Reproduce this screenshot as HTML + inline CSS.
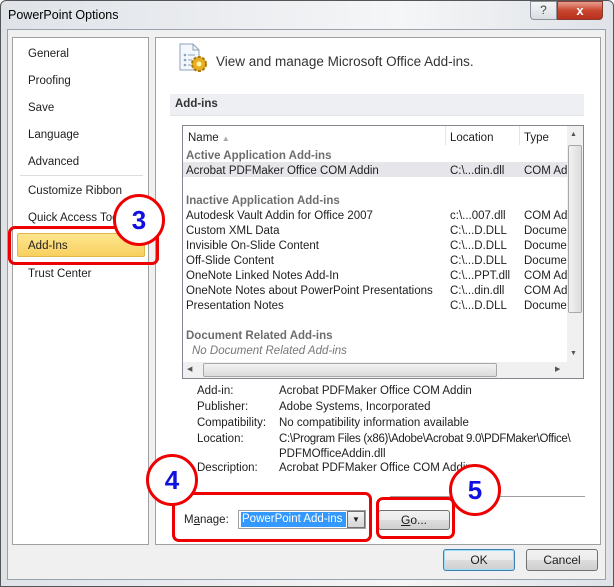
<!DOCTYPE html>
<html><head><style>
*{margin:0;padding:0;box-sizing:border-box}
body{width:614px;height:587px;overflow:hidden;background:#fff;font-family:"Liberation Sans",sans-serif;font-size:11.5px;color:#1e1e1e;position:relative}
.a{position:absolute;white-space:nowrap}
#win{position:absolute;left:0;top:0;width:614px;height:587px;border:1px solid #555;border-radius:6px 6px 0 0;background:linear-gradient(90deg,#dfe3e8 0%,#eceef1 40%,#f5f6f7 65%,#dfe3e8 100%)}
#client{position:absolute;left:7px;top:29px;width:599px;height:551px;background:#f0f0f0;border:1px solid #9aa3ad}
.panel{position:absolute;background:#fff;border:1px solid #a0a0a0}
.nav{left:15px;font-size:11.5px}
.r{position:absolute;font-size:11.5px;white-space:nowrap;margin-top:1px}
.g{color:#6d6d6d;font-weight:bold}
.btn{position:absolute;border:1px solid #707070;border-radius:3px;background:linear-gradient(#f2f2f2,#ebebeb 50%,#dddddd 51%,#cfcfcf);text-align:center;font-size:12px}
.circ{position:absolute;width:52px;height:52px;border:3px solid #e00;border-radius:50%;background:#fff;text-align:center;font:bold 26px/46px "Liberation Sans",sans-serif;color:#1010e0}
.rb{position:absolute;border:3px solid #e00;border-radius:7px}
</style></head><body>
<div id="win"></div>
<div class="a" style="left:8px;top:8px;font-size:12.5px;color:#000">PowerPoint Options</div>
<div class="a" style="left:530px;top:1px;width:27px;height:19px;border:1px solid #8a929c;border-radius:0 0 0 4px;background:linear-gradient(#f4f5f6,#d9dde2);text-align:center;font-size:12px;color:#444;line-height:17px">?</div>
<div class="a" style="left:557px;top:1px;width:46px;height:19px;border:1px solid #8a3a30;border-radius:0 0 4px 0;background:linear-gradient(#e8a090,#c8452e 50%,#b8301c);text-align:center;font-weight:bold;font-size:13px;color:#fff;line-height:17px">x</div>
<div id="client"></div>
<div class="panel" style="left:12px;top:37px;width:137px;height:508px"></div>
<div class="panel" style="left:155px;top:37px;width:446px;height:508px"></div>
<div class="a nav" style="left:28px;top:48px">General</div>
<div class="a nav" style="left:28px;top:75px">Proofing</div>
<div class="a nav" style="left:28px;top:102px">Save</div>
<div class="a nav" style="left:28px;top:129px">Language</div>
<div class="a nav" style="left:28px;top:156px">Advanced</div>
<div class="a" style="left:20px;top:175px;width:123px;height:1px;background:#ddd"></div>
<div class="a nav" style="left:28px;top:185px">Customize Ribbon</div>
<div class="a nav" style="left:28px;top:212px">Quick Access Toolbar</div>
<div class="a" style="left:17px;top:233px;width:128px;height:24px;border:1px solid #e0b84a;border-radius:2px;background:linear-gradient(#fde58e,#f8d060)"></div>
<div class="a nav" style="left:28px;top:240px">Add-Ins</div>
<div class="a nav" style="left:28px;top:268px">Trust Center</div>
<svg class="a" style="left:177px;top:42px" width="32" height="32" viewBox="0 0 32 32">
<path d="M3 2h13l6 6v20H3z" fill="#f4f7fb" stroke="#8fa3bb"/><path d="M16 2v6h6" fill="none" stroke="#8fa3bb"/>
<circle cx="8" cy="13" r="1.3" fill="#8fa3bb"/><circle cx="8" cy="18" r="1.3" fill="#8fa3bb"/><circle cx="8" cy="23" r="1.3" fill="#8fa3bb"/>
<path d="M11 13h7M11 18h4M11 23h3" stroke="#8fa3bb"/>
<circle cx="22" cy="22" r="7" fill="#e8b020" stroke="#a8780c" stroke-dasharray="3 1.5" stroke-width="2"/><circle cx="22" cy="22" r="2.5" fill="#fff3b0"/>
</svg>
<div class="a" style="left:216px;top:54px;font-size:13.5px;color:#333">View and manage Microsoft Office Add-ins.</div>
<div class="a" style="left:170px;top:94px;width:414px;height:22px;background:#eeeff2;border-bottom:1px solid #dfe2e6"></div>
<div class="a" style="left:175px;top:98px;font-weight:bold;font-size:11.5px;color:#333">Add-ins</div>
<div class="a" style="left:182px;top:125px;width:402px;height:254px;border:1px solid #828790;background:#fff"></div>
<div class="a" style="left:445px;top:126px;width:1px;height:19px;background:#e4e4e4"></div>
<div class="a" style="left:519px;top:126px;width:1px;height:19px;background:#e4e4e4"></div>
<div class="r" style="left:188px;top:131px">Name <span style="color:#aaa;font-size:8px">▲</span></div>
<div class="r" style="left:450px;top:131px">Location</div>
<div class="r" style="left:524px;top:131px">Type</div>
<div class="a" style="left:183px;top:162px;width:384px;height:15px;background:#e6e6ea"></div>
<div class="r g" style="left:186px;top:149px">Active Application Add-ins</div>
<div class="r" style="left:186px;top:164px">Acrobat PDFMaker Office COM Addin</div><div class="r" style="left:450px;top:164px">C:\...din.dll</div><div class="r" style="left:524px;top:164px">COM Ad</div>
<div class="r g" style="left:186px;top:194px">Inactive Application Add-ins</div>
<div class="r" style="left:186px;top:209px">Autodesk Vault Addin for Office 2007</div><div class="r" style="left:450px;top:209px">c:\...007.dll</div><div class="r" style="left:524px;top:209px">COM Ad</div>
<div class="r" style="left:186px;top:224px">Custom XML Data</div><div class="r" style="left:450px;top:224px">C:\...D.DLL</div><div class="r" style="left:524px;top:224px">Docume</div>
<div class="r" style="left:186px;top:239px">Invisible On-Slide Content</div><div class="r" style="left:450px;top:239px">C:\...D.DLL</div><div class="r" style="left:524px;top:239px">Docume</div>
<div class="r" style="left:186px;top:254px">Off-Slide Content</div><div class="r" style="left:450px;top:254px">C:\...D.DLL</div><div class="r" style="left:524px;top:254px">Docume</div>
<div class="r" style="left:186px;top:269px">OneNote Linked Notes Add-In</div><div class="r" style="left:450px;top:269px">C:\...PPT.dll</div><div class="r" style="left:524px;top:269px">COM Ad</div>
<div class="r" style="left:186px;top:284px">OneNote Notes about PowerPoint Presentations</div><div class="r" style="left:450px;top:284px">C:\...din.dll</div><div class="r" style="left:524px;top:284px">COM Ad</div>
<div class="r" style="left:186px;top:299px">Presentation Notes</div><div class="r" style="left:450px;top:299px">C:\...D.DLL</div><div class="r" style="left:524px;top:299px">Docume</div>
<div class="r g" style="left:186px;top:329px">Document Related Add-ins</div>
<div class="r" style="left:192px;top:344px;font-style:italic;color:#777">No Document Related Add-ins</div>
<div class="a" style="left:567px;top:126px;width:16px;height:236px;background:#f0f0f0"></div>
<div class="a" style="left:568px;top:145px;width:14px;height:168px;border:1px solid #a8a8a8;border-radius:2px;background:linear-gradient(90deg,#f2f2f2,#dcdcdc)"></div>
<div class="a" style="left:570px;top:131px;font-size:7px;color:#555">▲</div>
<div class="a" style="left:570px;top:350px;font-size:7px;color:#555">▼</div>
<div class="a" style="left:183px;top:362px;width:384px;height:16px;background:#f0f0f0"></div>
<div class="a" style="left:203px;top:363px;width:294px;height:14px;border:1px solid #a8a8a8;border-radius:2px;background:linear-gradient(#f2f2f2,#dcdcdc)"></div>
<div class="a" style="left:187px;top:365px;font-size:7px;color:#555">◀</div>
<div class="a" style="left:555px;top:365px;font-size:7px;color:#555">▶</div>
<div class="a" style="left:567px;top:362px;width:16px;height:16px;background:#f0f0f0"></div>
<div class="r" style="left:197px;top:384px">Add-in:</div><div class="r" style="left:279px;top:384px">Acrobat PDFMaker Office COM Addin</div>
<div class="r" style="left:197px;top:400px">Publisher:</div><div class="r" style="left:279px;top:400px">Adobe Systems, Incorporated</div>
<div class="r" style="left:197px;top:416px">Compatibility:</div><div class="r" style="left:279px;top:416px">No compatibility information available</div>
<div class="r" style="left:197px;top:432px">Location:</div><div class="r" style="left:279px;top:432px;letter-spacing:-0.3px">C:\Program Files (x86)\Adobe\Acrobat 9.0\PDFMaker\Office\</div>
<div class="r" style="left:279px;top:447px">PDFMOfficeAddin.dll</div>
<div class="r" style="left:197px;top:461px">Description:</div><div class="r" style="left:279px;top:461px">Acrobat PDFMaker Office COM Addin</div>
<div class="a" style="left:390px;top:496px;width:195px;height:1px;background:#a0a0a0"></div>
<div class="r" style="left:184px;top:513px">M<u>a</u>nage:</div>
<div class="a" style="left:238px;top:510px;width:128px;height:19px;border:1px solid #a0a0a0;background:#fff"></div>
<div class="a" style="left:241px;top:512px;width:105px;height:15px;background:#3399ff;color:#fff;font-size:11.5px;line-height:15px;padding-left:1px">PowerPoint Add-ins</div>
<div class="a" style="left:347px;top:511px;width:18px;height:17px;border:1px solid #707070;background:linear-gradient(#f2f2f2,#d6d6d6);font-size:8px;text-align:center;line-height:16px">▼</div>
<div class="btn" style="left:378px;top:510px;width:72px;height:20px;line-height:19px"><u>G</u>o...</div>
<div class="btn" style="left:443px;top:549px;width:72px;height:22px;line-height:21px;border-color:#3c7fb1;box-shadow:inset 0 0 0 1px #9fdcf7">OK</div>
<div class="btn" style="left:526px;top:549px;width:72px;height:22px;line-height:21px">Cancel</div>
<div class="rb" style="left:8px;top:226px;width:151px;height:39px"></div>
<div class="circ" style="left:113px;top:194px">3</div>
<div class="rb" style="left:172px;top:492px;width:200px;height:50px"></div>
<div class="circ" style="left:146px;top:454px">4</div>
<div class="rb" style="left:376px;top:497px;width:79px;height:42px"></div>
<div class="circ" style="left:449px;top:464px">5</div>
</body></html>
